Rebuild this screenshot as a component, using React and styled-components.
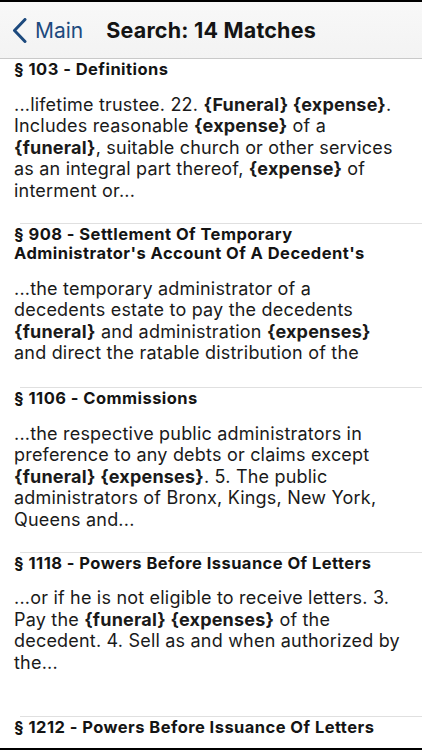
import React from "react";
import styled, { createGlobalStyle } from "styled-components";

const Global = createGlobalStyle`
  html, body { margin: 0; padding: 0; background: #000; }
  body { font-family: Inter, "Liberation Sans", Arial, sans-serif; }
  #root { width: 422px; height: 750px; overflow: hidden; }
`;

const Screen = styled.div`
  width: 422px;
  height: 746px;
  margin-top: 2px;
  background: #fff;
  display: flex;
  flex-direction: column;
  overflow: hidden;
`;

const NavBar = styled.header`
  flex: 0 0 57px;
  box-sizing: border-box;
  display: flex;
  align-items: center;
  background: linear-gradient(#f8f8f8, #f3f3f3);
  border-bottom: 1px solid #c9c9c9;
  padding-left: 12px;
`;

const Back = styled.div`
  display: flex;
  align-items: center;
  gap: 8px;
  color: #1d4a7e;
  font-size: 21px;
  margin-right: 23px;
`;

const NavTitle = styled.h1`
  margin: 0;
  font-size: 21.5px;
  font-weight: 700;
  letter-spacing: 0.2px;
  color: #141414;
`;

const List = styled.div`
  display: flex;
  flex-direction: column;
`;

const Row = styled.div`
  box-sizing: border-box;
  height: 164.5px;
  flex: 0 0 164.5px;
  position: relative;
  padding: 1px 0 0 14px;
  overflow: hidden;
  &::after {
    content: "";
    position: absolute;
    left: 20px;
    right: 0;
    bottom: 0;
    height: 1px;
    background: #e0e0e0;
  }
`;

const Title = styled.div`
  font-size: 16.5px;
  font-weight: 700;
  letter-spacing: 0.45px;
  line-height: 19.5px;
  color: #141414;
`;

const Body = styled.div`
  margin-top: 14px;
  font-size: 18px;
  letter-spacing: 0.2px;
  line-height: 21.5px;
  color: #1a1a1a;
`;

const Line = styled.div`
  white-space: nowrap;
`;

const Hit = styled.b`
  font-weight: 700;
`;

const rows = [
  {
    title: ["§ 103 - Definitions"],
    body: [
      ["...lifetime trustee. 22. ", "*{Funeral} {expense}", "."],
      ["Includes reasonable ", "*{expense}", " of a"],
      ["*{funeral}", ", suitable church or other services"],
      ["as an integral part thereof, ", "*{expense}", " of"],
      ["interment or..."],
    ],
  },
  {
    title: ["§ 908 - Settlement Of Temporary", "Administrator's Account Of A Decedent's"],
    body: [
      ["...the temporary administrator of a"],
      ["decedents estate to pay the decedents"],
      ["*{funeral}", " and administration ", "*{expenses}"],
      ["and direct the ratable distribution of the"],
    ],
  },
  {
    title: ["§ 1106 - Commissions"],
    body: [
      ["...the respective public administrators in"],
      ["preference to any debts or claims except"],
      ["*{funeral} {expenses}", ". 5. The public"],
      ["administrators of Bronx, Kings, New York,"],
      ["Queens and..."],
    ],
  },
  {
    title: ["§ 1118 - Powers Before Issuance Of Letters"],
    body: [
      ["...or if he is not eligible to receive letters. 3."],
      ["Pay the ", "*{funeral} {expenses}", " of the"],
      ["decedent. 4. Sell as and when authorized by"],
      ["the..."],
    ],
  },
  {
    title: ["§ 1212 - Powers Before Issuance Of Letters"],
    body: [],
  },
];

const Chevron = () => (
  <svg width="15" height="25" viewBox="0 0 15 25" fill="none">
    <path d="M13 1.5 L2.5 12.5 L13 23.5" stroke="#1d4a7e" strokeWidth="3" strokeLinecap="round" strokeLinejoin="round" />
  </svg>
);

export default function App() {
  return (
    <>
      <Global />
      <Screen>
        <NavBar>
          <Back>
            <Chevron />
            <span>Main</span>
          </Back>
          <NavTitle>Search: 14 Matches</NavTitle>
        </NavBar>
        <List>
          {rows.map((r, i) => (
            <Row key={i}>
              <Title>
                {r.title.map((t, j) => (
                  <Line key={j}>{t}</Line>
                ))}
              </Title>
              {r.body.length > 0 && (
                <Body>
                  {r.body.map((segs, j) => (
                    <Line key={j}>
                      {segs.map((s, k) =>
                        s.startsWith("*") ? <Hit key={k}>{s.slice(1)}</Hit> : <span key={k}>{s}</span>
                      )}
                    </Line>
                  ))}
                </Body>
              )}
            </Row>
          ))}
        </List>
      </Screen>
    </>
  );
}
